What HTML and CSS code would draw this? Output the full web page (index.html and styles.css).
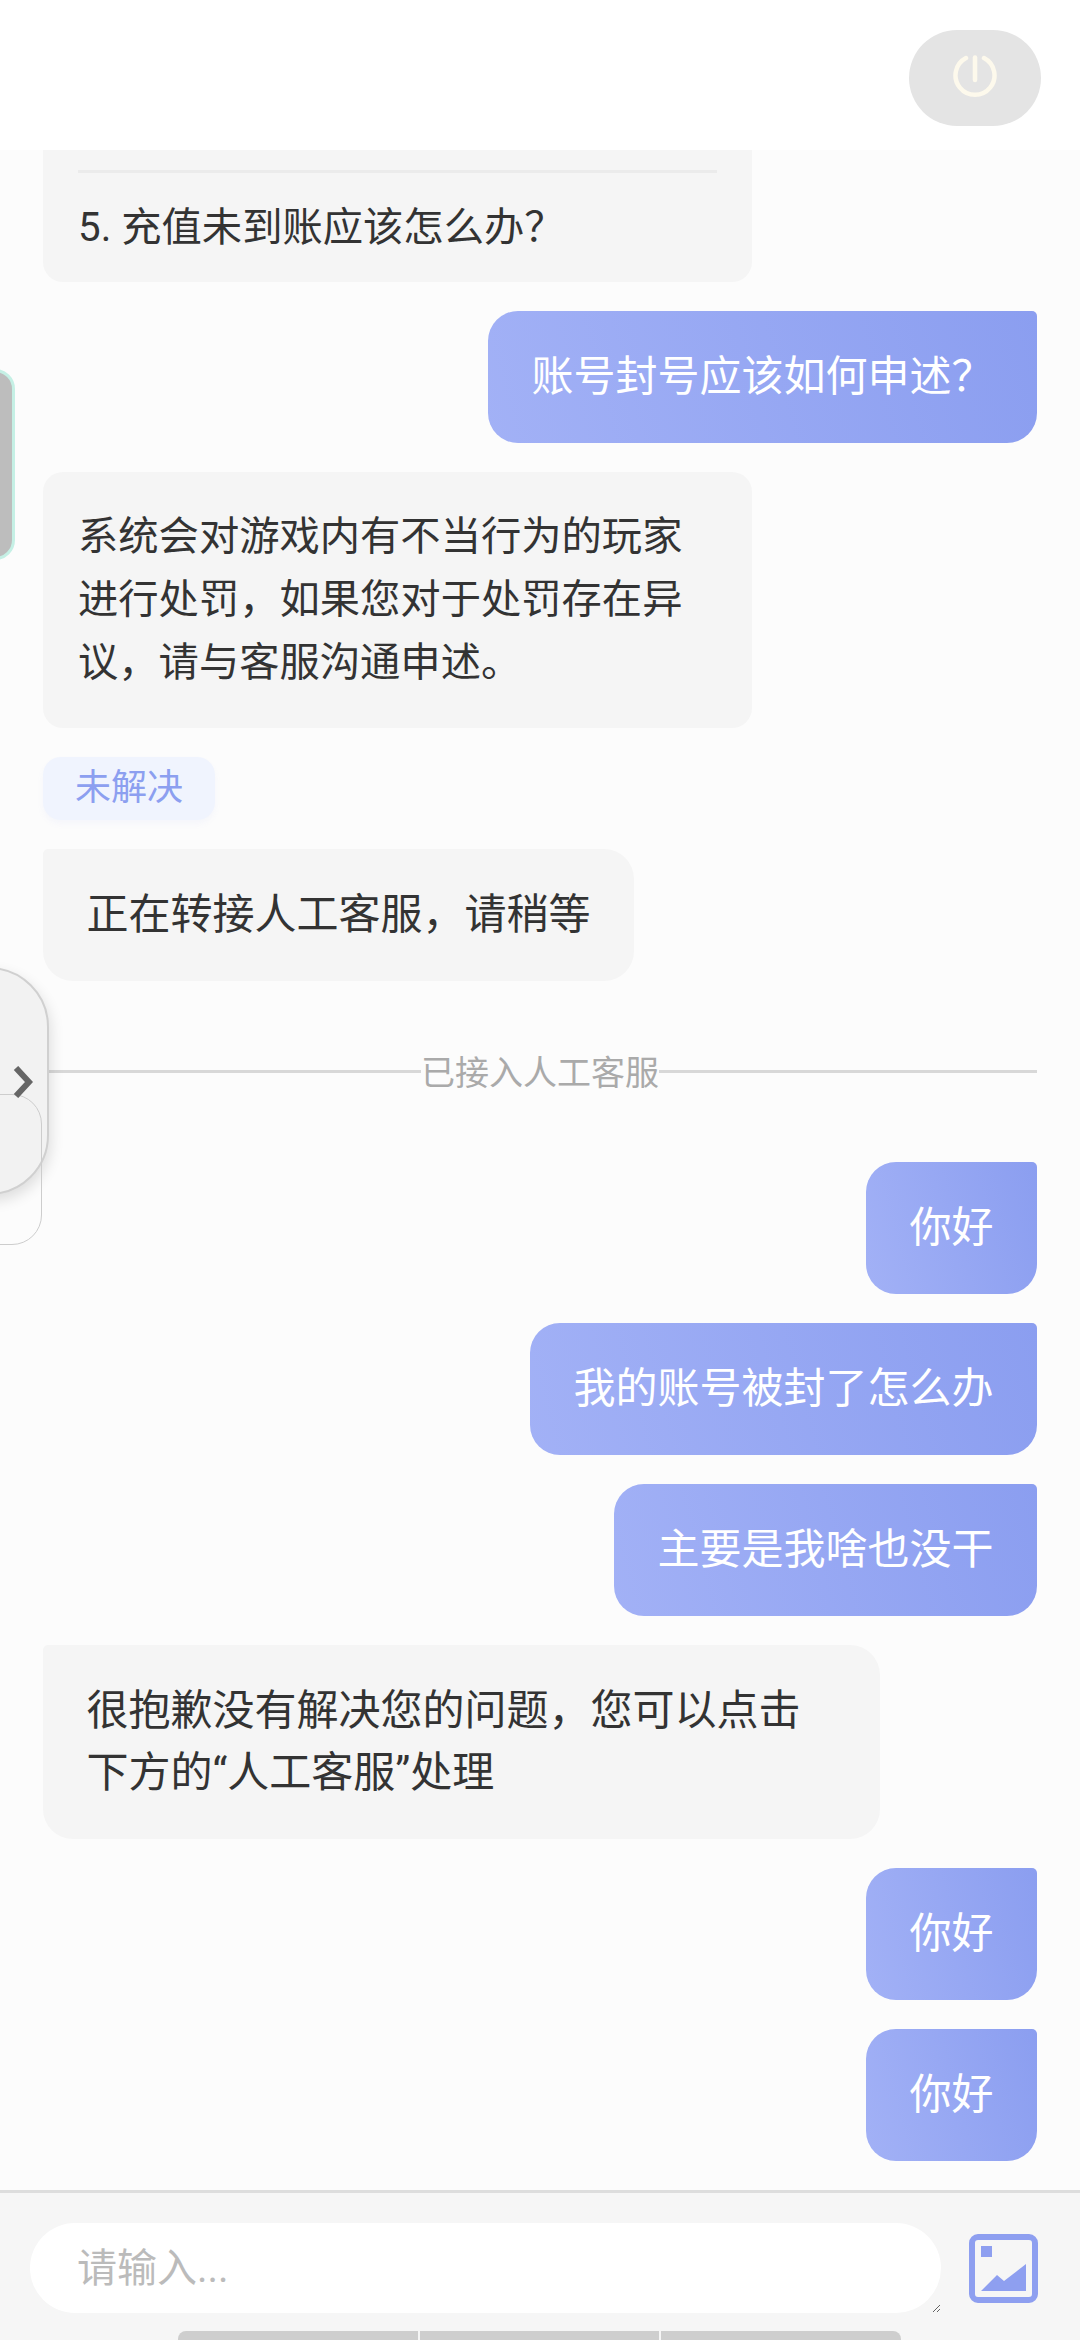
FILE: index.html
```html
<!doctype html>
<html lang="zh">
<head>
    <meta charset="utf-8">
    <meta name="viewport" content="width=device-width, initial-scale=1">
    <title>客服</title>
    <link rel="stylesheet" href="styles.css">
</head>
<body>
    <div class="page">
        <header class="top">
            <button class="power" type="button" aria-label="退出">
                <svg viewBox="0 0 44 44" width="44" height="44" fill="none" stroke="#fdf9ec" stroke-width="4.5" stroke-linecap="round">
                    <path d="M13 3A19.5 19.5 0 1 0 31 3"/>
                    <path d="M22 2.5V25"/>
                </svg>
            </button>
        </header>

        <main class="chat">
            <div class="msg bot rich first">
                <div class="rule"></div>
                <div>5. 充值未到账应该怎么办？</div>
            </div>
            <div class="msg user">账号封号应该如何申述？</div>
            <div class="msg bot rich">系统会对游戏内有不当行为的玩家进行处罚，如果您对于处罚存在异议，请与客服沟通申述。</div>
            <div class="tag">未解决</div>
            <div class="msg bot">正在转接人工客服，请稍等</div>
            <div class="divider"><span>已接入人工客服</span></div>
            <div class="msg user">你好</div>
            <div class="msg user">我的账号被封了怎么办</div>
            <div class="msg user">主要是我啥也没干</div>
            <div class="msg bot">很抱歉没有解决您的问题，您可以点击下方的“人工客服”处理</div>
            <div class="msg user">你好</div>
            <div class="msg user">你好</div>
        </main>

        <footer class="bottom">
            <div class="input-row">
                <textarea class="input" placeholder="请输入..."></textarea>
                <svg class="pic" viewBox="0 0 69 69" width="69" height="69">
                    <rect x="3" y="3" width="63" height="63" rx="6" fill="none" stroke="#8e9ff0" stroke-width="6"/>
                    <rect x="12" y="12" width="11" height="11" fill="#8e9ff0"/>
                    <path d="M12 57L28 41L35 47L57 30V57Z" fill="#8e9ff0"/>
                </svg>
            </div>
            <div class="home-bar"><i></i><i></i><i></i></div>
        </footer>

        <!-- floating bits over the chat -->
        <div class="float-teal"></div>
        <div class="float-panel"></div>
        <div class="float-back"></div>
        <svg class="chevron" viewBox="0 0 20 32" width="20" height="32" fill="none" stroke="#666" stroke-width="6">
            <path d="M3 2L16 16L3 30"/>
        </svg>
    </div>
</body>
</html>
```

FILE: styles.css
```css
* {
    box-sizing: border-box;
}
body {
    margin: 0;
    font-family: Roboto, "Noto Sans CJK SC", sans-serif;
    color: #333;
}
.page {
    position: relative;
    width: 1080px;
    height: 2340px;
    display: flex;
    flex-direction: column;
    overflow: hidden;
    background: #fcfcfc;
}
.top {
    height: 150px;
    flex: none;
    background: #fff;
    display: flex;
    justify-content: flex-end;
    padding: 30px 39px 0 0;
}
.power {
    width: 132px;
    height: 96px;
    border: none;
    border-radius: 48px;
    background: #e4e4e4;
    display: flex;
    align-items: center;
    justify-content: center;
    padding: 0;
}
.power svg {
    margin-bottom: 2px;
}
.chat {
    flex: 1;
    min-height: 0;
    display: flex;
    flex-direction: column;
    padding: 0 43px;
}
.chat > * {
    flex: none;
}
.msg {
    font-size: 42px;
    line-height: 62px;
    padding: 35px 43.5px;
    max-width: 837px;
    margin-bottom: 29px;
}
.bot {
    align-self: flex-start;
    background: #f5f5f5;
    border-radius: 5px 30px 30px 30px;
}
.user {
    align-self: flex-end;
    color: #fff;
    background: linear-gradient(75deg, #a2b1f6, #8b9ef0);
    border-radius: 30px 5px 30px 30px;
}
.rich {
    width: 709px;
    font-size: 40.3px;
    line-height: 63px;
    padding: 33px 35px 34px;
    border-radius: 20px;
}
.first {
    padding-top: 20px;
    padding-bottom: 23px;
    border-radius: 0 0 20px 20px;
}
.rule {
    height: 3px;
    background: #ebebeb;
    margin-bottom: 23px;
}
.tag {
    align-self: flex-start;
    width: 172px;
    height: 63px;
    margin-bottom: 29px;
    border-radius: 18px;
    background: #f0f4fe;
    box-shadow: 0 4px 6px rgba(140, 159, 240, 0.06);
    color: #8c9ff0;
    font-size: 36px;
    line-height: 63px;
    text-align: center;
}
.divider {
    display: flex;
    align-items: center;
    height: 122px;
    margin-bottom: 30px;
    color: #aaa;
    font-size: 34px;
}
.divider::before,
.divider::after {
    content: "";
    flex: 1;
    height: 3px;
    background: #d8d8d8;
}
.divider span {
    flex: none;
    margin-bottom: 2px;
}
.bottom {
    flex: none;
    height: 150px;
    background: #f6f6f6;
    border-top: 3px solid #ddd;
    padding: 30px 42px 0 30px;
}
.input-row {
    display: flex;
    align-items: center;
    justify-content: space-between;
}
.input {
    display: block;
    width: 911px;
    height: 90px;
    border: none;
    outline: none;
    border-radius: 45px;
    background: #fff;
    padding: 2px 47px 0;
    margin: 0;
    font: 40px/88px Roboto, "Noto Sans CJK SC", sans-serif;
}
.input::placeholder {
    color: #bbb;
}
.pic {
    flex: none;
}
.home-bar {
    position: absolute;
    left: 178px;
    bottom: 0;
    width: 723px;
    height: 9px;
    display: flex;
    gap: 2px;
    border-radius: 8px 8px 0 0;
    overflow: hidden;
}
.home-bar i {
    flex: 1;
    background: #cecece;
}
.float-teal {
    position: absolute;
    left: -30px;
    top: 369px;
    width: 45px;
    height: 191px;
    background: #bdbdbd;
    border: 3px solid #c5f0e5;
    border-radius: 20px;
}
.float-panel {
    position: absolute;
    left: -80px;
    top: 967px;
    width: 129px;
    height: 228px;
    background: #f2f2f2;
    border: 2px solid #d0d0d0;
    border-radius: 60px;
    box-shadow: 2px 6px 14px rgba(0, 0, 0, 0.12);
}
.float-back {
    position: absolute;
    left: -60px;
    top: 1094px;
    width: 102px;
    height: 151px;
    border: 1px solid #cdcdcd;
    border-radius: 30px;
}
.chevron {
    position: absolute;
    left: 13px;
    top: 1066px;
}
```
